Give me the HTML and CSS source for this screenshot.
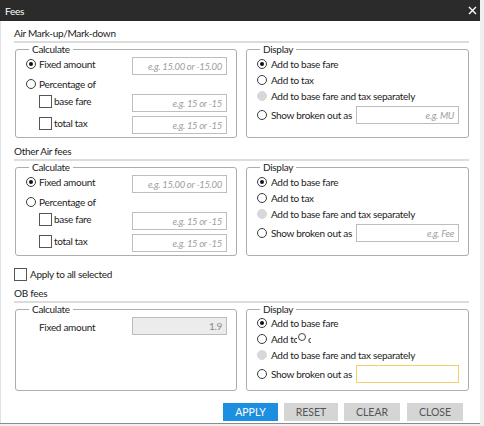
FILE: index.html
```html
<!DOCTYPE html>
<html lang="en">
<head>
<meta charset="utf-8">
<title>Fees</title>
<link rel="stylesheet" href="styles.css">
</head>
<body>
<div class="window">
  <div class="titlebar">
    <span class="title">Fees</span>
    <svg class="close-icon" viewBox="0 0 9 9" width="9" height="9"><path d="M1 1 L8 8 M8 1 L1 8" stroke="#fff" stroke-width="1.4" fill="none"/></svg>
  </div>
  <div class="content">

    <div class="section-title">Air Mark-up/Mark-down</div>
    <div class="rule"></div>
    <div class="groups">
      <fieldset class="group calc">
        <legend>Calculate</legend>
        <div class="row">
          <span class="opt"><span class="radio on"></span>Fixed amount</span>
          <span class="field ph">e.g. 15.00 or -15.00</span>
        </div>
        <div class="row row-pct">
          <span class="opt"><span class="radio"></span>Percentage of</span>
        </div>
        <div class="row">
          <span class="opt sub"><span class="check"></span>base fare</span>
          <span class="field ph">e.g. 15 or -15</span>
        </div>
        <div class="row row-last">
          <span class="opt sub"><span class="check"></span>total tax</span>
          <span class="field ph">e.g. 15 or -15</span>
        </div>
      </fieldset>
      <fieldset class="group display">
        <legend>Display</legend>
        <div class="drow"><span class="radio on"></span>Add to base fare</div>
        <div class="drow"><span class="radio"></span>Add to tax</div>
        <div class="drow"><span class="radio disabled"></span>Add to base fare and tax separately</div>
        <div class="drow drow-input"><span class="radio"></span>Show broken out as<span class="field dfield ph">e.g. MU</span></div>
      </fieldset>
    </div>

    <div class="section-title sec-next">Other Air fees</div>
    <div class="rule"></div>
    <div class="groups">
      <fieldset class="group calc">
        <legend>Calculate</legend>
        <div class="row">
          <span class="opt"><span class="radio on"></span>Fixed amount</span>
          <span class="field ph">e.g. 15.00 or -15.00</span>
        </div>
        <div class="row row-pct">
          <span class="opt"><span class="radio"></span>Percentage of</span>
        </div>
        <div class="row">
          <span class="opt sub"><span class="check"></span>base fare</span>
          <span class="field ph">e.g. 15 or -15</span>
        </div>
        <div class="row row-last">
          <span class="opt sub"><span class="check"></span>total tax</span>
          <span class="field ph">e.g. 15 or -15</span>
        </div>
      </fieldset>
      <fieldset class="group display">
        <legend>Display</legend>
        <div class="drow"><span class="radio on"></span>Add to base fare</div>
        <div class="drow"><span class="radio"></span>Add to tax</div>
        <div class="drow"><span class="radio disabled"></span>Add to base fare and tax separately</div>
        <div class="drow drow-input"><span class="radio"></span>Show broken out as<span class="field dfield ph">e.g. Fee</span></div>
      </fieldset>
    </div>

    <div class="apply-all"><span class="check"></span>Apply to all selected</div>

    <div class="section-title sec-ob">OB fees</div>
    <div class="rule"></div>
    <div class="groups">
      <fieldset class="group calc calc-ob">
        <legend>Calculate</legend>
        <div class="row">
          <span class="opt plain">Fixed amount</span>
          <span class="field filled">1.9</span>
        </div>
      </fieldset>
      <fieldset class="group display display-ob">
        <legend>Display</legend>
        <div class="drow"><span class="radio on"></span>Add to base fare</div>
        <div class="drow"><span class="radio"></span><span class="clip clip-a">Add to</span><span class="mini-radio"></span><span class="clip clip-c">c</span></div>
        <div class="drow"><span class="radio disabled"></span>Add to base fare and tax separately</div>
        <div class="drow drow-input"><span class="radio"></span>Show broken out as<span class="field dfield focus"></span></div>
      </fieldset>
    </div>

    <div class="buttons">
      <button class="btn primary b-apply">APPLY</button>
      <button class="btn b-reset">RESET</button>
      <button class="btn b-clear">CLEAR</button>
      <button class="btn b-close">CLOSE</button>
    </div>
  </div>
</div>
</body>
</html>
```

FILE: styles.css
```css
* { box-sizing: border-box; }

body {
  margin: 0;
  background: #efefef;
  font-family: Lato, "Noto Sans", sans-serif;
  font-size: 10px;
  letter-spacing: -0.3px;
  color: #1c1c1c;
}

.window {
  width: 480px;
  height: 424px;
  background: #fff;
  border-bottom: 1px solid #8c8c8c;
  display: flex;
  flex-direction: column;
}

.titlebar {
  flex: none;
  height: 21px;
  background: #2b2b2b;
  color: #fff;
  display: flex;
  align-items: center;
  justify-content: space-between;
  padding: 0 3px 0 5px;
}

.title { font-size: 10px; }

.close-icon { display: block; }

.content {
  flex: 1;
  border-left: 1px solid #e2e2e2;
  padding: 0 11px 0 13px;
  display: flex;
  flex-direction: column;
}

.section-title {
  height: 14px;
  line-height: 14px;
  margin-top: 5px;
  white-space: nowrap;
}

.sec-next { margin-top: 6px; }
.sec-ob { margin-top: 5px; }

.rule {
  height: 2px;
  margin-top: 1px;
  background: #dcdcdc;
}

.groups {
  display: flex;
  gap: 9px;
  margin-left: 1px;
}

.group {
  margin: 0;
  min-width: 0;
  border: 1px solid #adadad;
  border-radius: 3px;
}

.group legend {
  padding: 0 3px;
  margin-left: 3px;
  line-height: 12px;
  font-size: 10px;
}

.calc {
  width: 222px;
  flex: none;
  padding: 2px 9px 2px 10px;
}

.display {
  flex: 1;
  padding: 1px 9px 4px 10px;
}

.row {
  display: flex;
  align-items: flex-start;
  justify-content: space-between;
  height: 19px;
}

.row-pct { height: 18px; }
.row-last { margin-top: 3px; }

.opt {
  display: flex;
  align-items: center;
  line-height: 14px;
  white-space: nowrap;
}

.row-pct .opt { margin-top: 1px; }

.opt.sub { padding-left: 13px; }
.opt.plain { padding-left: 13px; margin-top: 3px; }

.radio {
  flex: none;
  width: 10px;
  height: 10px;
  margin-right: 3px;
  border: 1px solid #3a3a3a;
  border-radius: 50%;
  background: #fff;
  display: inline-flex;
  align-items: center;
  justify-content: center;
}

.radio.on::after {
  content: "";
  width: 4px;
  height: 4px;
  border-radius: 50%;
  background: #111;
}

.radio.disabled {
  background: #d8d8d8;
  border-color: #d8d8d8;
}

.check {
  flex: none;
  width: 13px;
  height: 13px;
  margin-right: 2px;
  border: 1px solid #555;
  background: #fff;
}

.field {
  flex: none;
  width: 95px;
  height: 18px;
  border: 1px solid #bdbdbd;
  background: #fff;
  display: flex;
  align-items: center;
  justify-content: flex-end;
  padding-right: 4px;
  white-space: nowrap;
}

.ph {
  font-style: italic;
  font-size: 9.5px;
  color: #9e9e9e;
}

.field.filled {
  background: #ececec;
  color: #8a8a8a;
}

.drow {
  display: flex;
  align-items: center;
  height: 16px;
  white-space: nowrap;
}

.drow .radio { margin-right: 4px; }

.drow-input {
  height: 18px;
  margin-top: 2px;
}

.dfield {
  width: 103px;
  margin-left: auto;
}

.dfield.focus { border-color: #f2d06b; }

.display-ob { padding-bottom: 7px; }
.display-ob .drow:first-of-type { margin-top: -1px; }

.clip {
  display: inline-block;
  overflow: hidden;
  white-space: nowrap;
}

.clip-a { width: 26px; }
.clip-c { width: 3px; }

.mini-radio {
  flex: none;
  width: 8px;
  height: 8px;
  margin: -4px 2px 0 1px;
  border: 1px solid #444;
  border-radius: 50%;
}

.apply-all {
  display: flex;
  align-items: center;
  line-height: 14px;
  margin-top: 11px;
}

.apply-all .check { margin-right: 3px; }

.buttons {
  display: flex;
  justify-content: flex-end;
  gap: 6px;
  margin-top: 12px;
  padding-right: 6px;
}

.btn {
  height: 18px;
  border: none;
  border-radius: 0;
  padding: 0;
  font-family: Lato, "Noto Sans", sans-serif;
  font-size: 10.5px;
  color: #555;
  background: #d5d5d5;
}

.btn.primary {
  background: #1c8fe0;
  color: #fff;
}

.b-apply { width: 55px; }
.b-reset { width: 54px; }
.b-clear { width: 56px; }
.b-close { width: 56px; margin-left: 1px; }
```
